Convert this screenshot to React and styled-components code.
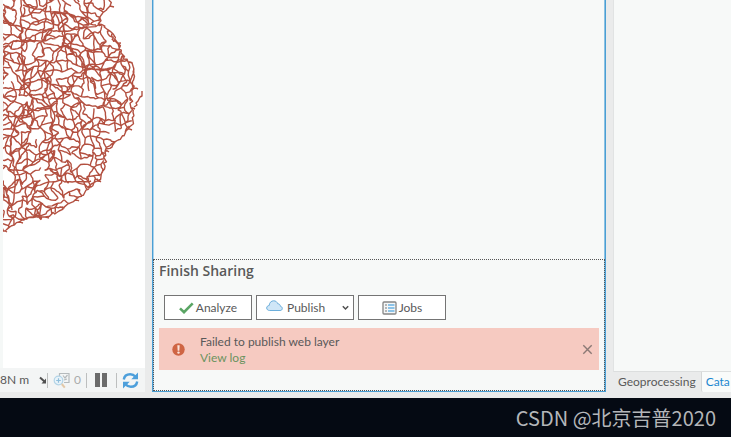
import React from 'react';
import styled, { createGlobalStyle } from 'styled-components';

const GlobalStyle = createGlobalStyle`
  * {
    box-sizing: border-box;
  }

  body {
    margin: 0;
    background: #eaebeb;
    color: #595959;
    font-family: Lato, "Open Sans", sans-serif;
    font-size: 12px;
    line-height: 16px;
  }

  button {
    font: inherit;
    color: inherit;
  }
`;

const Page = styled.div`
  display: flex;
  flex-direction: column;
  min-height: 100vh;
  overflow: hidden;
`;

const Workspace = styled.main`
  display: grid;
  flex: 1;
  grid-template-columns: 145px minmax(0, 1fr) 118px;
  column-gap: 7px;
  background: #eaebeb;
`;

const MapColumn = styled.section`
  display: flex;
  flex-direction: column;
  min-width: 0;
  padding-bottom: 6px;
`;

const MapView = styled.div`
  flex: 1;
  overflow: hidden;
  border-left: 3px solid #f5f8f7;
  background: #fff;

  svg {
    display: block;
  }
`;

const StatusBar = styled.div`
  display: flex;
  align-items: center;
  height: 24px;
  overflow: hidden;
  background: #f3f5f5;
`;

const Units = styled.button`
  display: flex;
  flex: none;
  align-items: center;
  justify-content: space-between;
  width: 47px;
  padding: 0;
  border: 0;
  background: none;
  white-space: nowrap;
`;

const Divider = styled.span`
  width: 1px;
  height: 15px;
  background: #bdbfbf;
`;

const StatusButton = styled.button`
  display: flex;
  flex: ${({ $grow }) => $grow || 1} 1 0;
  align-items: center;
  justify-content: center;
  gap: 4px;
  padding: 0;
  border: 0;
  background: none;
  color: ${({ $muted }) => ($muted ? '#a9abab' : '#6b6b6b')};
`;

const SharePane = styled.section`
  display: flex;
  flex-direction: column;
  margin-bottom: 6px;
  border: 1px solid #4a9fd4;
  border-top: 0;
  background: #f7f9f8;
  box-shadow: inset -1px 0 #8cc1e2, inset 1px 0 #a9d2ec;
`;

const PaneBody = styled.div`
  flex: 1;
`;

const Finish = styled.div`
  padding: 2px 5px 20px;
  border: 1px dotted #555;
`;

const Title = styled.h2`
  margin: 0;
  font-family: "Open Sans", sans-serif;
  font-size: 14px;
  font-weight: 600;
  line-height: 18px;
`;

const Actions = styled.div`
  display: flex;
  gap: 4px;
  margin: 15px 0 8px 5px;
`;

const ActionButton = styled.button`
  display: flex;
  align-items: center;
  justify-content: center;
  gap: 2px;
  width: ${({ $wide }) => ($wide ? '98px' : '88px')};
  height: 25px;
  padding: 0 4px;
  border: 1px solid #747474;
  background: #fff;

  svg {
    flex: none;
  }
`;

const ActionLabel = styled.span`
  flex: ${({ $fill }) => ($fill ? 1 : 'none')};
  text-align: left;
`;

const Alert = styled.div`
  display: flex;
  align-items: center;
  height: 42px;
  padding: 0 6px 0 13px;
  background: #f6cac1;
`;

const AlertText = styled.div`
  flex: 1;
  margin-left: 15px;
  padding-top: 2px;
`;

const LogLink = styled.a`
  display: block;
  width: max-content;
  color: #6b935f;
  text-decoration: none;
`;

const CloseButton = styled.button`
  display: flex;
  padding: 0;
  border: 0;
  background: none;
`;

const DockPane = styled.aside`
  display: flex;
  flex-direction: column;
  min-width: 0;
  overflow: hidden;
`;

const DockBody = styled.div`
  flex: 1;
  border-left: 1px solid #e1e3e3;
  border-bottom: 1px solid #dcdede;
  background: #f7f9f8;
`;

const Tabs = styled.div`
  display: flex;
  height: 26px;
`;

const Tab = styled.button`
  flex: none;
  height: 20px;
  padding: 0 5px 0 4px;
  border: 0;
  border-left: 1px solid ${({ $active }) => ($active ? '#d5d7d7' : 'transparent')};
  border-radius: 0 0 2px 2px;
  background: ${({ $active }) => ($active ? '#f9fbfa' : 'transparent')};
  color: ${({ $active }) => ($active ? '#1b87d0' : '#595959')};
`;

const Footer = styled.footer`
  display: flex;
  align-items: center;
  justify-content: flex-end;
  height: 39px;
  padding-right: 15px;
  background: #050a13;
  color: #b4b6b9;
  font-family: "Noto Sans CJK SC", sans-serif;
  font-size: 20px;
  line-height: 24px;
`;

const COAST = [
  [106, -6], [107, 6], [99, 14], [95, 24], [107, 31], [114, 42], [118, 53],
  [125, 62], [131, 69], [131, 88], [127, 96], [128, 108], [131, 116], [125, 129],
  [115, 140], [102, 151], [99, 172], [94, 181], [86, 189], [72, 200], [56, 211],
  [42, 217], [28, 217], [16, 222], [8, 226], [0, 231], [-8, 234], [-8, -6]
];

const HUBS = [
  [93, 25], [83, 69], [9, 210], [100, 154], [22, 91], [62, 93], [82, 18],
  [18, 38], [88, 181], [124, 82], [106, 98], [60, 40], [48, 108]
];

const TRUNK_ROADS = [
  [[0, 20], [30, 30], [62, 31], [95, 25]],
  [[0, 45], [20, 40], [45, 44], [75, 50], [83, 69], [106, 70], [120, 61]],
  [[18, 0], [18, 38], [22, 91], [40, 105], [48, 108]],
  [[48, 108], [62, 93], [83, 69], [60, 40], [55, 0]],
  [[93, 25], [82, 18], [55, 12], [20, 5]],
  [[83, 69], [110, 68], [124, 82], [106, 98]],
  [[9, 210], [12, 180], [7, 140], [20, 110], [48, 108]],
  [[48, 108], [48, 150], [55, 180], [88, 181]]
];

const createRandom = (seed) => {
  let state = seed;
  return () => {
    state = (state * 16807) % 2147483647;
    return state / 2147483647;
  };
};

const isInside = ([x, y]) => {
  let inside = false;
  COAST.forEach(([ax, ay], i) => {
    const [bx, by] = COAST[(i + 1) % COAST.length];
    if ((ay > y) !== (by > y) && x < ((bx - ax) * (y - ay)) / (by - ay) + ax) {
      inside = !inside;
    }
  });
  return inside;
};

// Pulls the far end of a road back to the coast line
const trimToCoast = (from, to) => {
  let low = 0;
  let high = 1;
  const at = (t) => [from[0] + (to[0] - from[0]) * t, from[1] + (to[1] - from[1]) * t];
  for (let i = 0; i < 8; i += 1) {
    const middle = (low + high) / 2;
    if (isInside(at(middle))) {
      low = middle;
    } else {
      high = middle;
    }
  }
  return at(low);
};

// Joins two junctions with a slightly crooked road
const road = (a, b, random, bend = 2) => {
  const dx = b[0] - a[0];
  const dy = b[1] - a[1];
  const length = Math.hypot(dx, dy) || 1;
  const steps = Math.max(2, Math.round(length / 3));
  const bow = (random() - 0.5) * Math.min(length, 10) * 0.35;
  let path = `M${a[0].toFixed(1)} ${a[1].toFixed(1)}`;
  for (let i = 1; i < steps; i += 1) {
    const t = i / steps;
    const arc = Math.sin(t * Math.PI) * bow;
    const x = a[0] + dx * t - (dy / length) * arc + (random() - 0.5) * bend;
    const y = a[1] + dy * t + (dx / length) * arc + (random() - 0.5) * bend;
    path += `L${x.toFixed(1)} ${y.toFixed(1)}`;
  }
  return `${path}L${b[0].toFixed(1)} ${b[1].toFixed(1)}`;
};

const buildRoads = () => {
  const random = createRandom(90217);
  const size = 7;
  const nodes = [];
  for (let row = 0; row < 36; row += 1) {
    nodes.push([]);
    for (let col = 0; col < 22; col += 1) {
      // Long waves keep the rows and columns from reading as a grid
      let x = col * size - 4 + (random() - 0.5) * 7 + Math.sin(row / 2.3) * 3;
      let y = row * size - 4 + (random() - 0.5) * 7 + Math.sin(col / 1.9) * 4;
      HUBS.forEach(([hx, hy]) => {
        const distance = Math.hypot(hx - x, hy - y);
        if (distance < 14) {
          x += (hx - x) * 0.2;
          y += (hy - y) * 0.2;
        }
      });
      nodes[row].push([x, y]);
    }
  }

  const roads = [];
  const connect = (a, b, chance) => {
    if (!b || random() > chance) {
      return;
    }
    const fromInside = isInside(a);
    const toInside = isInside(b);
    if (fromInside && toInside) {
      roads.push(road(a, b, random));
    } else if (fromInside) {
      roads.push(road(a, trimToCoast(a, b), random));
    } else if (toInside) {
      roads.push(road(b, trimToCoast(b, a), random));
    }
  };
  nodes.forEach((line, row) => {
    line.forEach((node, col) => {
      const next = nodes[row + 1] || [];
      connect(node, line[col + 1], 0.74);
      connect(node, next[col], 0.74);
      connect(node, next[col + 1], 0.16);
      connect(node, next[col - 1], 0.16);
    });
  });

  COAST.slice(0, -2).forEach((point, i) => {
    roads.push(road(point, COAST[i + 1], random, 4));
    if (i % 2 === 1) {
      roads.push(road(point, [point[0] + 4, point[1] + 1], random));
    }
  });
  TRUNK_ROADS.forEach((trunk) => {
    trunk.slice(1).forEach((point, i) => {
      roads.push(road(trunk[i], point, random));
    });
  });
  return roads.join('');
};

const ROADS = buildRoads();

const RoadMap = () => (
  <svg width="142" height="240" viewBox="0 0 142 240" role="img" aria-label="Road network">
    <g fill="none" stroke="#b35040" strokeWidth="1.4" strokeLinejoin="round">
      <path d={ROADS} />
      <path d="M139 91v5l-2 1-2 4-2 2 1 2-3 2" />
    </g>
  </svg>
);

const CheckIcon = () => (
  <svg width="15" height="12" viewBox="0 0 15 12" aria-hidden="true">
    <path d="M1 6.4 5 10.2 13.7 1.4" fill="none" stroke="#5aa564" strokeWidth="2.6" />
  </svg>
);

const CloudIcon = () => (
  <svg width="17" height="12" viewBox="0 0 17 12" aria-hidden="true">
    <path
      d="M3.7 10.5C1.9 10.5.7 9.5.7 8c0-1.4 1-2.4 2.5-2.5C3.3 2.7 5.2.8 7.7.8c2 0 3.4 1.1 4 2.9 1.6.1 2.6 1.1 2.7 2.6 1.1.2 1.9 1 1.9 2.1 0 1.3-.9 2.1-2.3 2.1Z"
      fill="#cfe6f7"
      stroke="#6caedb"
      strokeWidth="1"
    />
  </svg>
);

const ListIcon = () => (
  <svg width="15" height="14" viewBox="0 0 15 14" aria-hidden="true">
    <rect x="1" y="1" width="13" height="12" rx="1" fill="#f4f6f7" stroke="#858585" strokeWidth="1.3" />
    <path d="M3 4h2M3 7h2M3 10h2" stroke="#777" />
    <path d="M6 4h6.5M6 7h6.5M6 10h6.5" stroke="#69b3e3" strokeWidth="1.3" />
  </svg>
);

const ChevronIcon = () => (
  <svg width="7" height="6" viewBox="0 0 7 6" aria-hidden="true">
    <path d="M.8 1.3 3.5 4 6.2 1.3" fill="none" stroke="#4f4f4f" strokeWidth="1.5" />
  </svg>
);

const UnitsArrow = () => (
  <svg width="8" height="8" viewBox="0 0 8 8" aria-hidden="true">
    <path d="m1 1.5 4.5 4" stroke="#505050" strokeWidth="2" />
    <path d="M7 2.5v5H2.5Z" fill="#505050" />
  </svg>
);

const SelectionIcon = () => (
  <svg width="17" height="17" viewBox="0 0 17 17" aria-hidden="true" fill="none">
    <path d="M6.5 4V1.5H16v9h-5M10 3.5 12 6l2.5-3M11 8l3-1" stroke="#b5babc" strokeWidth="1.2" />
    <circle cx="5.5" cy="8.5" r="4.3" fill="#e8f3f9" stroke="#b3d4e7" strokeWidth="1.2" />
    <path d="M3.2 8.5h4.6M5.5 6.2v4.6" stroke="#8fbfdc" strokeWidth="1.2" />
    <path d="m8.8 12 3 3.7" stroke="#e3c9a8" strokeWidth="2" />
  </svg>
);

const PauseIcon = () => (
  <svg width="12" height="14" viewBox="0 0 12 14" aria-hidden="true">
    <path d="M0 0h5v14H0zM7 0h5v14H7z" fill="#6b6b6b" />
  </svg>
);

const RefreshIcon = () => (
  <svg width="17" height="17" viewBox="0 0 17 17" aria-hidden="true">
    <g fill="none" stroke="#4d9fdb" strokeWidth="2.4">
      <path d="M1.8 7.5C2.3 4 5 2.2 8.2 2.2c2.100 0 3.900.8 5.300 2.500" />
      <path d="M15.2 9.5c-.5 3.500-3.200 5.300-6.400 5.300-2.100 0-3.900-.8-5.300-2.500" />
    </g>
    <path d="M16 .5v6.7H9.3ZM1 16.5V9.8h6.7Z" fill="#4d9fdb" />
  </svg>
);

const ErrorIcon = () => (
  <svg width="13" height="13" viewBox="0 0 13 13" aria-hidden="true">
    <circle cx="6.5" cy="6.5" r="6.2" fill="#cf6544" />
    <path d="M5.3 2.2h2.4l-.4 5.5H5.7Z" fill="#fae4dc" />
    <circle cx="6.5" cy="9.6" r="1.2" fill="#fae4dc" />
  </svg>
);

const CloseIcon = () => (
  <svg width="11" height="11" viewBox="0 0 11 11" aria-hidden="true">
    <path d="m1.3 1.3 8.4 8.4M9.7 1.3 1.3 9.7" stroke="#8b7975" strokeWidth="1.4" />
  </svg>
);

const MapPanel = () => (
  <MapColumn>
    <MapView>
      <RoadMap />
    </MapView>
    <StatusBar>
      <Units type="button">
        8N m
        <UnitsArrow />
      </Units>
      <Divider />
      <StatusButton type="button" $muted $grow={4} aria-label="Selected features: 0">
        <SelectionIcon />
        0
      </StatusButton>
      <Divider />
      <StatusButton type="button" $grow={3} aria-label="Pause drawing">
        <PauseIcon />
      </StatusButton>
      <Divider />
      <StatusButton type="button" $grow={3} aria-label="Refresh">
        <RefreshIcon />
      </StatusButton>
    </StatusBar>
  </MapColumn>
);

const PublishIcon = styled.span`
  display: flex;
  padding: 0 2px 4px 5px;
`;

const SharePanel = () => (
  <SharePane>
    <PaneBody />
    <Finish>
      <Title>Finish Sharing</Title>
      <Actions>
        <ActionButton type="button">
          <CheckIcon />
          <ActionLabel>Analyze</ActionLabel>
        </ActionButton>
        <ActionButton type="button" $wide>
          <PublishIcon>
            <CloudIcon />
          </PublishIcon>
          <ActionLabel $fill>Publish</ActionLabel>
          <ChevronIcon />
        </ActionButton>
        <ActionButton type="button">
          <ListIcon />
          <ActionLabel>Jobs</ActionLabel>
        </ActionButton>
      </Actions>
      <Alert role="alert">
        <ErrorIcon />
        <AlertText>
          Failed to publish web layer
          <LogLink href="#log">View log</LogLink>
        </AlertText>
        <CloseButton type="button" aria-label="Dismiss">
          <CloseIcon />
        </CloseButton>
      </Alert>
    </Finish>
  </SharePane>
);

const DockPanel = () => (
  <DockPane>
    <DockBody />
    <Tabs>
      <Tab type="button">Geoprocessing</Tab>
      <Tab type="button" $active>Cata</Tab>
    </Tabs>
  </DockPane>
);

const App = () => (
  <Page>
    <GlobalStyle />
    <Workspace>
      <MapPanel />
      <SharePanel />
      <DockPanel />
    </Workspace>
    <Footer>CSDN @北京吉普2020</Footer>
  </Page>
);

export default App;
